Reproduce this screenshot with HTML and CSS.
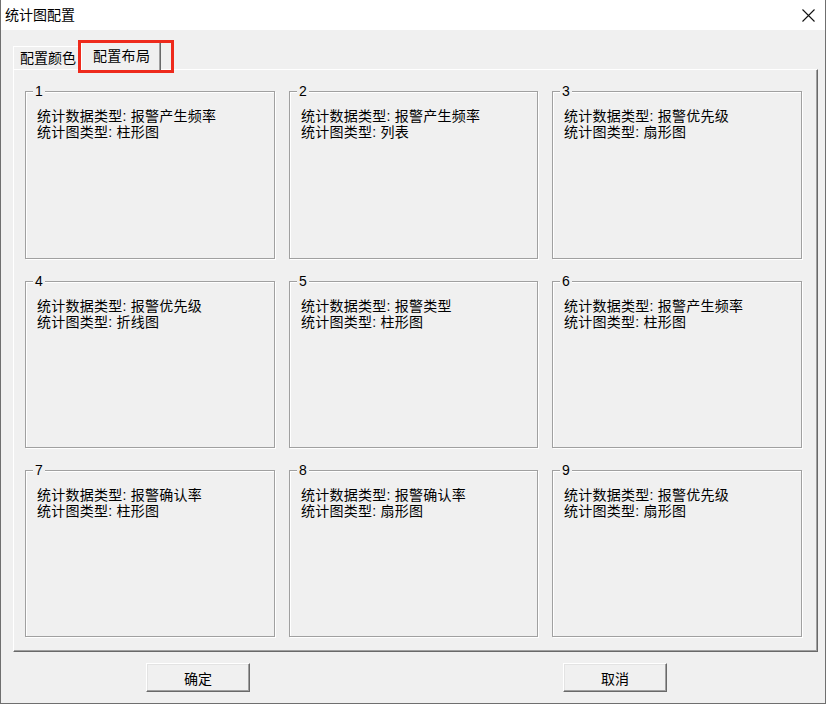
FILE: index.html
```html
<!DOCTYPE html>
<html lang="zh">
<head>
    <meta charset="UTF-8">
    <title>统计图配置</title>
    <link rel="stylesheet" href="styles.css">
</head>
<body>

    <div class="window">
        <!-- 标题栏 -->
        <div class="titlebar">
            <span class="title">统计图配置</span>
            <svg class="close" width="13" height="13" viewBox="0 0 13 13">
                <path d="M0.5 0.5 L12.5 12.5 M12.5 0.5 L0.5 12.5" stroke="#111" stroke-width="1.1" fill="none"/>
            </svg>
        </div>

        <div class="client">
            <!-- 选项卡 -->
            <div class="tabs">
                <div class="tab">配置颜色</div>
                <div class="tab tab-active">配置布局</div>
            </div>

            <div class="panel">
                <div class="grid">
                    <div class="group">
                        <span class="legend">1</span>
                        <div>统计数据类型: 报警产生频率</div>
                        <div>统计图类型: 柱形图</div>
                    </div>
                    <div class="group">
                        <span class="legend">2</span>
                        <div>统计数据类型: 报警产生频率</div>
                        <div>统计图类型: 列表</div>
                    </div>
                    <div class="group">
                        <span class="legend">3</span>
                        <div>统计数据类型: 报警优先级</div>
                        <div>统计图类型: 扇形图</div>
                    </div>
                    <div class="group">
                        <span class="legend">4</span>
                        <div>统计数据类型: 报警优先级</div>
                        <div>统计图类型: 折线图</div>
                    </div>
                    <div class="group">
                        <span class="legend">5</span>
                        <div>统计数据类型: 报警类型</div>
                        <div>统计图类型: 柱形图</div>
                    </div>
                    <div class="group">
                        <span class="legend">6</span>
                        <div>统计数据类型: 报警产生频率</div>
                        <div>统计图类型: 柱形图</div>
                    </div>
                    <div class="group">
                        <span class="legend">7</span>
                        <div>统计数据类型: 报警确认率</div>
                        <div>统计图类型: 柱形图</div>
                    </div>
                    <div class="group">
                        <span class="legend">8</span>
                        <div>统计数据类型: 报警确认率</div>
                        <div>统计图类型: 扇形图</div>
                    </div>
                    <div class="group">
                        <span class="legend">9</span>
                        <div>统计数据类型: 报警优先级</div>
                        <div>统计图类型: 扇形图</div>
                    </div>
                </div>
            </div>

            <!-- 按钮 -->
            <div class="buttons">
                <button class="button">确定</button>
                <button class="button">取消</button>
            </div>
        </div>
    </div>

</body>
</html>
```

FILE: styles.css
```css
body {
    margin: 0;
    background: #ffffff;
    font-family: "Liberation Sans", "Noto Sans CJK SC", sans-serif;
    font-size: 14px;
    color: #000;
}

.window {
    width: 826px;
    height: 704px;
    box-sizing: border-box;
    border: 1px solid #6f6f6f;
    border-top: none;
    background: #f0f0f0;
    display: flex;
    flex-direction: column;
}

/* 标题栏 */
.titlebar {
    height: 30px;
    background: #ffffff;
    display: flex;
    align-items: center;
    justify-content: space-between;
    padding: 0 10px 0 4px;
}
.title {
    line-height: 16px;
}
.close {
    margin-top: 1px;
}

.client {
    padding: 13px 0 0 12px;
}

/* 选项卡 */
.tabs {
    display: flex;
    align-items: flex-end;
    height: 26px;
    position: relative;
    z-index: 2;
}
.tab {
    height: 22px;
    padding: 0 5px 0 6px;
    line-height: 22px;
    border-left: 1px solid #ffffff;
    border-top: 1px solid #ffffff;
    background: #f0f0f0;
    margin-right: 0;
}
.tab-active {
    position: relative;
    height: 27px;
    margin-bottom: -1px;
    padding: 0 10px 0 11px;
    line-height: 27px;
    border-right: 1px solid #696969;
    box-shadow: inset -1px 0 0 #a0a0a0;
    letter-spacing: 0.3px;
}
/* 红色标注框 */
.tab-active::after {
    content: "";
    position: absolute;
    left: -4px;
    top: -3px;
    right: -14px;
    bottom: -3px;
    border: 3px solid #ee2a1c;
}

.panel {
    width: 805px;
    box-sizing: border-box;
    border-left: 1px solid #ffffff;
    border-top: 1px solid #ffffff;
    border-right: 1px solid #696969;
    border-bottom: 1px solid #696969;
    box-shadow: inset -1px -1px 0 #a0a0a0;
    padding: 21px 0 14px 11px;
}

.grid {
    display: grid;
    grid-template-columns: 250px 249px 250px;
    grid-template-rows: 168px 167px 167px;
    column-gap: 14px;
    row-gap: 22px;
}

/* 分组框 */
.group {
    position: relative;
    box-sizing: border-box;
    border: 1px solid #a0a0a0;
    box-shadow: inset 1px 1px 0 #ffffff, 1px 1px 0 #ffffff;
    padding: 16px 0 0 11px;
    line-height: 16px;
    letter-spacing: 0.25px;
}
.legend {
    position: absolute;
    top: -9px;
    left: 7px;
    padding: 0 2px;
    background: #f0f0f0;
    line-height: 16px;
}

/* 按钮 */
.buttons {
    display: flex;
    gap: 313px;
    padding: 11px 0 0 133px;
}
.button {
    width: 104px;
    height: 29px;
    box-sizing: border-box;
    background: #f0f0f0;
    border: 1px solid;
    border-color: #ffffff #696969 #696969 #ffffff;
    box-shadow: inset -1px -1px 0 #a0a0a0, inset 1px 1px 0 #e3e3e3;
    font-family: "Liberation Sans", "Noto Sans CJK SC", sans-serif;
    font-size: 14px;
    color: #000;
    padding: 0;
}
```
